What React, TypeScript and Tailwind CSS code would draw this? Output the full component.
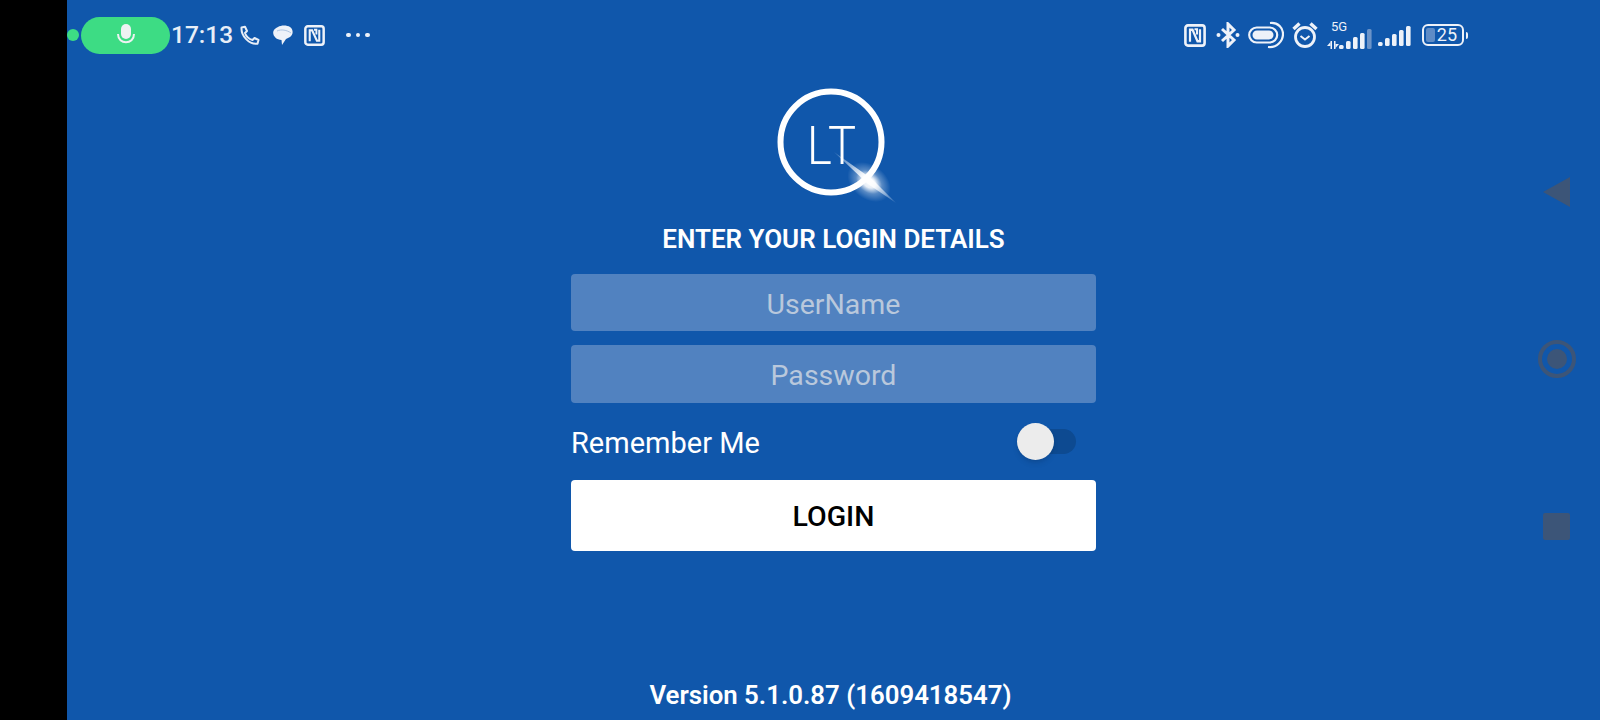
const roboto = "font-['Roboto',sans-serif]"

function Phone() {
  return (
    <svg width="21" height="21" viewBox="0 0 21 21" fill="none" stroke="#e8eef7" strokeWidth="2" strokeLinejoin="round">
      <path d="M2.5 2.5 L6 1.8 L8 6 L6 8 C7 11 10 14 13.5 15 L15.5 13 L19.5 15 L18.5 18.8 C10 19.5 2 11 2.5 2.5 Z" />
    </svg>
  )
}

function Bubbles() {
  return (
    <svg width="21" height="21" viewBox="0 0 21 21" fill="#eef2f9">
      <path d="M6 2 C9 0 15 0 18 2 C22 5 21 10 18 12 L14 14 L10 20 L9.5 15 C4 15 0 10 1.5 6 C2 4 4 3 6 2 Z" />
      <path d="M5 6 C9 4 15 5 19 8" fill="none" stroke="#9db9dc" strokeWidth="0.8" />
    </svg>
  )
}

function Nfc({ w, h }: { w: number; h: number }) {
  return (
    <svg width={w} height={h} viewBox="0 0 22 22" preserveAspectRatio="none" fill="none" stroke="#eef2f9" strokeWidth="2.6">
      <rect x="1.4" y="1.4" width="19.2" height="19.2" rx="2.5" />
      <path d="M6 17 V5.5 H8.5 L13.5 16.5 H16 V5" strokeWidth="2.2" />
      <path d="M10.5 5 H13 V10" strokeWidth="2" />
    </svg>
  )
}

function Bluetooth() {
  return (
    <svg width="24" height="26" viewBox="0 0 24 26" fill="none" stroke="#eef2f9" strokeWidth="3">
      <path d="M6 7 L18 18 L12 24 V2 L18 8 L6 19" />
      <circle cx="2.5" cy="13" r="2" fill="#eef2f9" stroke="none" />
      <circle cx="21.5" cy="13" r="2" fill="#eef2f9" stroke="none" />
    </svg>
  )
}

function Link() {
  return (
    <svg width="36" height="28" viewBox="0 0 36 28" fill="none" stroke="#eef2f9" strokeWidth="2.2">
      <rect x="1.2" y="6.5" width="28" height="15" rx="7.5" />
      <rect x="4.5" y="9.5" width="21" height="9" rx="4.5" fill="#eef2f9" stroke="none" />
      <path d="M22 2 C30 1 35 7 35 13 C35 20 29 27 20 26" />
    </svg>
  )
}

function Alarm() {
  return (
    <svg width="26" height="28" viewBox="0 0 26 28" fill="none" stroke="#eef2f9" strokeWidth="2.8">
      <circle cx="13" cy="16" r="9.5" />
      <path d="M8.5 15 L13 18.5 L17.5 15" strokeWidth="2" />
      <path d="M1.5 8 L7.5 2.5" strokeWidth="3.4" />
      <path d="M24.5 8 L18.5 2.5" strokeWidth="3.4" />
    </svg>
  )
}

function Signal({ dim }: { dim?: boolean }) {
  const bars = [
    { x: 0, h: 4 },
    { x: 7, h: 8 },
    { x: 14, h: 12 },
    { x: 21, h: 16 },
    { x: 28, h: 20 },
  ]
  return (
    <svg width="33" height="21" viewBox="0 0 33 21">
      {bars.map((b, i) => (
        <rect
          key={b.x}
          x={b.x}
          y={21 - b.h}
          width="4.6"
          height={b.h}
          rx="1.5"
          fill={dim && i === 4 ? '#6b93c8' : '#eef2f9'}
        />
      ))}
    </svg>
  )
}

function FiveG() {
  return (
    <div className="relative w-[43px] h-[27px]">
      <span className={`absolute left-[4px] top-[-3px] text-[13px] leading-[16px] text-[#eef2f9] ${roboto}`}>5G</span>
      <svg className="absolute left-0 bottom-0" width="12" height="8" viewBox="0 0 12 8" fill="#eef2f9">
        <path d="M0 5 L3.5 1 V5 Z" />
        <path d="M3.5 0 H5 V8 H3.5 Z" />
        <path d="M7 0 H8.5 V8 H7 Z" />
        <path d="M8.5 3 L12 3 L8.5 7 Z" />
      </svg>
      <div className="absolute left-[12px] bottom-0">
        <Signal dim />
      </div>
    </div>
  )
}

function Battery() {
  return (
    <div className="flex items-center gap-[2px]">
      <div className="relative w-[42px] h-[22px] rounded-[6px] border-2 border-[#eef2f9] flex items-center justify-end pr-[5px] overflow-hidden">
        <div className="absolute left-[2px] top-[2px] bottom-[2px] w-[9px] rounded-[2px] bg-[#5f8cc6]" />
        <span className={`relative text-[18px] leading-none text-[#eef2f9] ${roboto}`}>25</span>
      </div>
      <div className="w-[2px] h-[7px] rounded-r-sm bg-[#eef2f9]" />
    </div>
  )
}

function StatusBar() {
  return (
    <div className="h-[70px] flex items-center justify-between">
      <div className="flex items-center">
        <div className="size-3 rounded-full bg-[#3ddc84]" />
        <div className="ml-[2px] w-[89px] h-[37px] rounded-full bg-[#3ddc84] flex items-center justify-center">
          <svg width="20" height="24" viewBox="0 0 20 24" fill="none">
            <rect x="5" y="1" width="10" height="15" rx="5" fill="#eef2f2" />
            <path d="M2 11 C2 22 18 22 18 11" stroke="#eef2f2" strokeWidth="2" />
          </svg>
        </div>
        <span className={`ml-[1px] text-[24.5px] font-medium leading-none text-[#e8eef7] ${roboto}`}>17:13</span>
        <div className="ml-[6px]"><Phone /></div>
        <div className="ml-[12px]"><Bubbles /></div>
        <div className="ml-[11px]"><Nfc w={21} h={21} /></div>
        <div className="ml-[21px] flex gap-[5px]">
          <span className="size-[4.5px] rounded-full bg-[#eef2f9]" />
          <span className="size-[4.5px] rounded-full bg-[#eef2f9]" />
          <span className="size-[4.5px] rounded-full bg-[#eef2f9]" />
        </div>
      </div>
      <div className="flex items-center mr-[132px]">
        <Nfc w={22} h={23} />
        <div className="ml-[10px]"><Bluetooth /></div>
        <div className="ml-[8px]"><Link /></div>
        <div className="ml-[8px]"><Alarm /></div>
        <div className="ml-[9px]"><FiveG /></div>
        <div className="ml-[8px]"><Signal /></div>
        <div className="ml-[11px]"><Battery /></div>
      </div>
    </div>
  )
}

function Logo() {
  return (
    <svg width="240" height="126" viewBox="0 0 240 126" className="mt-[10px]">
      <defs>
        <radialGradient id="flare">
          <stop offset="0%" stopColor="#ffffff" stopOpacity="1" />
          <stop offset="30%" stopColor="#ffffff" stopOpacity="0.9" />
          <stop offset="60%" stopColor="#ffffff" stopOpacity="0.3" />
          <stop offset="100%" stopColor="#ffffff" stopOpacity="0" />
        </radialGradient>
        <linearGradient id="ray" x1="0" y1="0" x2="1" y2="1">
          <stop offset="0%" stopColor="#ffffff" stopOpacity="0.15" />
          <stop offset="55%" stopColor="#ffffff" stopOpacity="1" />
          <stop offset="100%" stopColor="#ffffff" stopOpacity="0.1" />
        </linearGradient>
      </defs>
      <circle cx="117" cy="62" r="50.5" fill="none" stroke="#ffffff" strokeWidth="6" />
      <text transform="translate(93 84) scale(0.87 1)" fill="#ffffff" fontSize="54" fontWeight="300" letterSpacing="3" fontFamily="Roboto, sans-serif">LT</text>
      <ellipse cx="155" cy="102" rx="24" ry="17" transform="rotate(38 155 102)" fill="url(#flare)" />
      <path d="M120 72 L158 99 L182 123 L154 104 Z" fill="url(#ray)" />
    </svg>
  )
}

function Field({ placeholder, h, pt }: { placeholder: string; h: string; pt: string }) {
  return (
    <input
      placeholder={placeholder}
      className={`w-full ${h} ${pt} rounded-[4px] bg-[#5182c0] text-center text-[28.5px] outline-none placeholder:text-[#b9c8dc] ${roboto}`}
    />
  )
}

export default function App() {
  return (
    <div className={`w-[1600px] h-[720px] flex overflow-hidden relative ${roboto}`}>
      <div className="w-[67px] bg-black" />
      <div className="flex-1 flex flex-col bg-[#1057ab]">
        <StatusBar />
        <div className="flex-1 flex flex-col items-center">
          <Logo />
          <h1 className="mt-[18px] text-[26px] leading-[30px] font-semibold text-white">ENTER YOUR LOGIN DETAILS</h1>
          <form className="mt-[20px] w-[525px] flex flex-col">
            <Field placeholder="UserName" h="h-[57px]" pt="pt-[4px]" />
            <div className="mt-[14px]">
              <Field placeholder="Password" h="h-[58px]" pt="pt-[2px]" />
            </div>
            <div className="h-[77px] flex items-center justify-between">
              <span className="pt-[5px] text-[29px] text-white">Remember Me</span>
              <div className="relative mr-[20px] w-[59px] h-[25px] rounded-full bg-[#0d4a91] flex items-center">
                <div className="size-[37px] rounded-full bg-[#ececec] shadow-md" />
              </div>
            </div>
            <button type="button" className="h-[71px] pt-[4px] rounded-[4px] bg-white text-[28.5px] font-medium text-black">LOGIN</button>
          </form>
          <p className="mt-auto mb-[10px] mr-[6px] text-[25.8px] leading-[30px] font-semibold text-white">Version 5.1.0.87 (1609418547)</p>
        </div>
      </div>
      {/* nav buttons sit over the page */}
      <div className="absolute right-[30px] top-[177px] w-[27px] h-[30px] bg-[#3c5578] [clip-path:polygon(100%_0,100%_100%,0_50%)]" />
      <div className="absolute right-[24px] top-[340px] size-[38px] rounded-full border-[4px] border-[#3c5578] flex items-center justify-center">
        <div className="size-[20px] rounded-full bg-[#3c5578]" />
      </div>
      <div className="absolute right-[30px] top-[513px] size-[27px] rounded-[2px] bg-[#3c5578]" />
    </div>
  )
}
